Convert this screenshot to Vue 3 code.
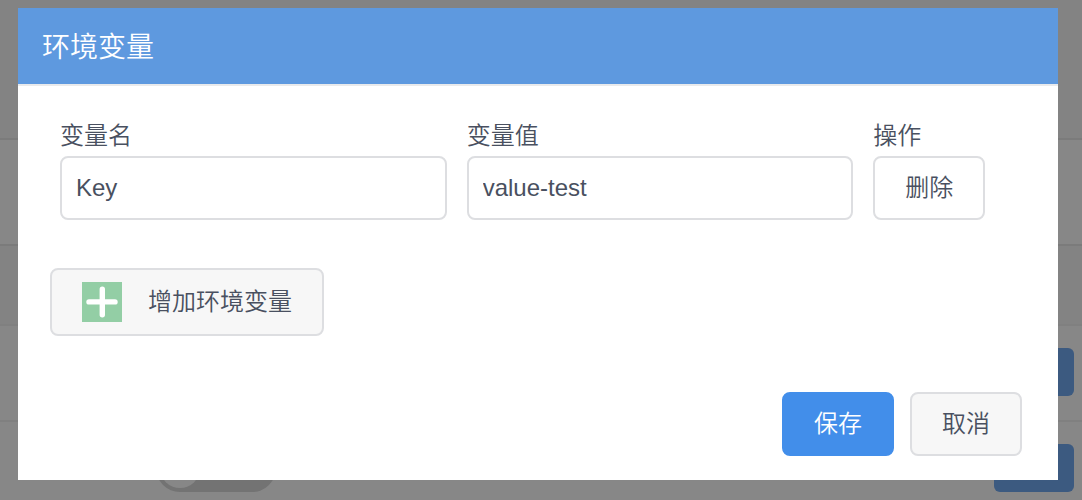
<script setup>
import { ref } from 'vue'

const variables = ref([{ id: 1, name: 'Key', value: 'value-test' }])
let nextId = 2

function addVariable() {
  variables.value.push({ id: nextId++, name: '', value: '' })
}

function removeVariable(id) {
  variables.value = variables.value.filter((item) => item.id !== id)
}
</script>

<template>
  <div class="screen">
    <div class="page" aria-hidden="true">
      <div class="row row-intro"></div>
      <div class="row row-light"></div>
      <div class="row row-head"></div>
      <div class="row row-item"><span class="action"></span></div>
      <div class="row row-last">
        <span class="switch"><span class="knob"></span></span>
        <span class="action"></span>
      </div>
    </div>

    <section class="dialog" role="dialog" aria-labelledby="dialog-title">
      <header class="dialog-header">
        <h1 id="dialog-title">环境变量</h1>
      </header>

      <form class="dialog-body" @submit.prevent>
        <div v-for="item in variables" :key="item.id" class="fields">
          <div class="field">
            <label :for="`name-${item.id}`">变量名</label>
            <input :id="`name-${item.id}`" v-model="item.name" type="text" />
          </div>
          <div class="field">
            <label :for="`value-${item.id}`">变量值</label>
            <input :id="`value-${item.id}`" v-model="item.value" type="text" />
          </div>
          <div class="field">
            <span class="caption">操作</span>
            <button class="btn plain" type="button" @click="removeVariable(item.id)">删除</button>
          </div>
        </div>

        <button class="btn add" type="button" @click="addVariable">
          <svg class="plus" viewBox="0 0 40 40" aria-hidden="true">
            <rect width="40" height="40" fill="#93cea5" />
            <path d="M20.300 7.200V32.800M7 19.900H33" stroke="#fff" stroke-width="5.400" stroke-linecap="round" />
          </svg>
          <span>增加环境变量</span>
        </button>

        <footer class="actions">
          <button class="btn primary" type="submit">保存</button>
          <button class="btn" type="button">取消</button>
        </footer>
      </form>
    </section>
  </div>
</template>

<style>
body {
  background: #838383;
}
</style>

<style scoped>
.screen {
  position: relative;
  height: 100vh;
  overflow: hidden;
  font-family: "Liberation Sans", "Noto Sans CJK SC", sans-serif;
  font-size: 24px;
  font-weight: 350;
  line-height: 36px;
  color: #495060;
}

.row {
  box-sizing: border-box;
  display: flex;
  align-items: flex-start;
  padding: 22px 8px 0 156px;
  border-bottom: 2px solid #808080;
  background: #878787;
}

.row-intro {
  height: 140px;
  border-color: #7b7b7b;
  background: #838383;
}

.row-light {
  height: 106px;
  border-color: #7b7b7b;
}

.row-head {
  height: 80px;
  background: #838383;
}

.row-item,
.row-last {
  height: 96px;
}

.action {
  width: 80px;
  height: 48px;
  margin-left: auto;
  border-radius: 6px;
  background: #3c5a80;
}

.switch {
  box-sizing: border-box;
  width: 120px;
  height: 48px;
  padding: 4px;
  border-radius: 24px;
  background: #737373;
}

.knob {
  display: block;
  width: 40px;
  height: 40px;
  border-radius: 50%;
  background: #878787;
}

.dialog {
  position: absolute;
  top: 8px;
  left: 18px;
  right: 24px;
  background: #fff;
}

.dialog-header {
  padding: 22px 24px 18px;
  border-bottom: 2px solid #e9eaec;
  background: #5e99df;
  color: #fff;
}

h1 {
  margin: 0;
  font-size: 28px;
  font-weight: 350;
  line-height: 36px;
}

.dialog-body {
  padding: 32px 32px 24px;
}

.fields {
  display: grid;
  grid-template-columns: 5fr 5fr 2fr;
  margin-bottom: 48px;
}

.field {
  display: flex;
  flex-direction: column;
  align-items: flex-start;
  gap: 2px;
  padding: 0 10px;
}

input {
  box-sizing: border-box;
  width: 100%;
  height: 64px;
  padding: 0 14px;
  border: 2px solid #dddee1;
  border-radius: 8px;
  background: #fff;
  font: inherit;
  color: inherit;
}

.btn {
  box-sizing: border-box;
  min-width: 112px;
  height: 64px;
  padding: 0 28px;
  border: 2px solid #dddee1;
  border-radius: 8px;
  background: #f7f7f7;
  font: inherit;
  color: inherit;
}

.plain {
  background: #fff;
}

.primary {
  border-color: #428eea;
  background: #428eea;
  color: #fff;
}

.add {
  display: flex;
  align-items: center;
  gap: 26px;
  height: 68px;
  padding: 0 30px;
}

.plus {
  width: 40px;
  height: 40px;
}

.actions {
  display: flex;
  justify-content: flex-end;
  gap: 16px;
  margin-top: 56px;
  padding-right: 4px;
}
</style>
